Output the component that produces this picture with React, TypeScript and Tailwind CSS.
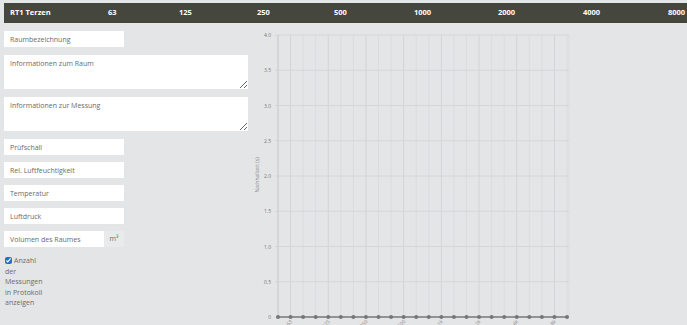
import React from "react";

const bands = ["63", "125", "250", "500", "1000", "2000", "4000", "8000"];
const bandWidths = ["w-[71px]", "w-[78px]", "w-[77px]", "w-[80px]", "w-[84px]", "w-[85px]", "w-[85px]", "w-[60px]"];

const xTicks = [
  "50", "63", "80", "100", "125", "160", "200", "250", "315", "400", "500", "630",
  "800", "1k", "1.25k", "1.6k", "2k", "2.5k", "3.15k", "4k", "5k", "6.3k", "8k", "10k",
];

function Field({ placeholder }: { placeholder: string }) {
  return (
    <input
      className="h-[16px] w-[120px] bg-white px-[6px] text-[7px] text-[#555] outline-none placeholder:text-[#6b6b6b]"
      placeholder={placeholder}
    />
  );
}

function Area({ placeholder }: { placeholder: string }) {
  return (
    <textarea
      className="block h-[34px] w-[244px] resize-y bg-white px-[6px] py-[4px] text-[7px] text-[#555] outline-none placeholder:text-[#6b6b6b]"
      placeholder={placeholder}
    />
  );
}

function Chart() {
  const left = 28;
  const right = 317;
  const top = 5;
  const bottom = 287;
  const step = (right - left) / 23;
  const ys = [4.0, 3.5, 3.0, 2.5, 2.0, 1.5, 1.0, 0.5, 0];
  return (
    <svg width="330" height="295" className="block" style={{ fontFamily: "'Open Sans', sans-serif" }}>
      {/* vertical grid */}
      {xTicks.map((_, i) => (
        <line
          key={"v" + i}
          x1={left + i * step}
          x2={left + i * step}
          y1={top}
          y2={bottom}
          stroke={i % 3 === 1 ? "#d3d4d6" : "#dbdcde"}
          strokeWidth={1}
        />
      ))}
      <line x1={right + 2} x2={right + 2} y1={top} y2={bottom} stroke="#dbdcde" />
      {/* horizontal grid + labels */}
      {ys.map((v, i) => {
        const y = top + (i * (bottom - top)) / 8;
        return (
          <g key={"h" + i}>
            <line x1={left - 3} x2={right + 2} y1={y} y2={y} stroke="#d5d6d8" />
            <text x={21} y={y + 2} fontSize="5" fill="#777" textAnchor="end">
              {v === 0 ? "0" : v.toFixed(1)}
            </text>
          </g>
        );
      })}
      <line x1={left} x2={left} y1={top} y2={bottom} stroke="#c8c9cb" />
      <text
        x={0}
        y={0}
        fontSize="5"
        fill="#888"
        textAnchor="middle"
        transform="translate(9 145) rotate(-90)"
      >
        Nachhallzeit (s)
      </text>
      {/* baseline */}
      <line x1={left} x2={right} y1={bottom} y2={bottom} stroke="#7a7a7a" strokeWidth={1.5} />
      {xTicks.map((t, i) => (
        <g key={"p" + i}>
          <circle cx={left + i * step} cy={bottom} r={2} fill="#777" />
          {i % 3 === 1 && (
            <text
              fontSize="5"
              fill="#888"
              textAnchor="end"
              transform={`translate(${left + i * step + 2} ${bottom + 5}) rotate(-45)`}
            >
              {t}
            </text>
          )}
        </g>
      ))}
    </svg>
  );
}

export default function App() {
  return (
    <div
      className="h-[325px] w-[687px] overflow-hidden bg-[#e4e5e7] pt-[3px]"
      style={{ fontFamily: "'Open Sans', sans-serif" }}
    >
      <div className="ml-[4px] flex h-[20px] items-center bg-[#45463e] text-[7.5px] font-bold text-white">
        <div className="w-[104px] shrink-0 pl-[6px]">RT1 Terzen</div>
        {bands.map((b, i) => (
          <div key={b} className={bandWidths[i] + " shrink-0"}>
            {b}
          </div>
        ))}
      </div>

      <div className="flex">
        <div className="ml-[4px] mt-[8px] flex w-[244px] shrink-0 flex-col">
          <Field placeholder="Raumbezeichnung" />
          <div className="mt-[8px]">
            <Area placeholder="Informationen zum Raum" />
          </div>
          <div className="mt-[8px]">
            <Area placeholder="Informationen zur Messung" />
          </div>
          <div className="mt-[8px] flex flex-col gap-[7px]">
            <Field placeholder="Prüfschall" />
            <Field placeholder="Rel. Luftfeuchtigkeit" />
            <Field placeholder="Temperatur" />
            <Field placeholder="Luftdruck" />
            <div className="flex h-[16px] w-[120px]">
              <input
                className="h-[16px] w-[100px] bg-white px-[6px] text-[7px] text-[#555] outline-none placeholder:text-[#6b6b6b]"
                placeholder="Volumen des Raumes"
              />
              <div className="flex w-[20px] items-center justify-center bg-[#e9eaec] text-[7px] text-[#6b6b6b]">
                m³
              </div>
            </div>
          </div>
          <label className="ml-[1px] mt-[9px] block w-[40px] text-[7px] leading-[10.5px] text-[#6b6b6b]">
            <input
              type="checkbox"
              defaultChecked
              className="mr-[2px] h-[7px] w-[7px] accent-[#1f6fc5] align-[-1px]"
            />
            Anzahl der Messungen in Protokoll anzeigen
          </label>
        </div>
        <div className="ml-[2px] mt-[7px]">
          <Chart />
        </div>
      </div>
    </div>
  );
}
